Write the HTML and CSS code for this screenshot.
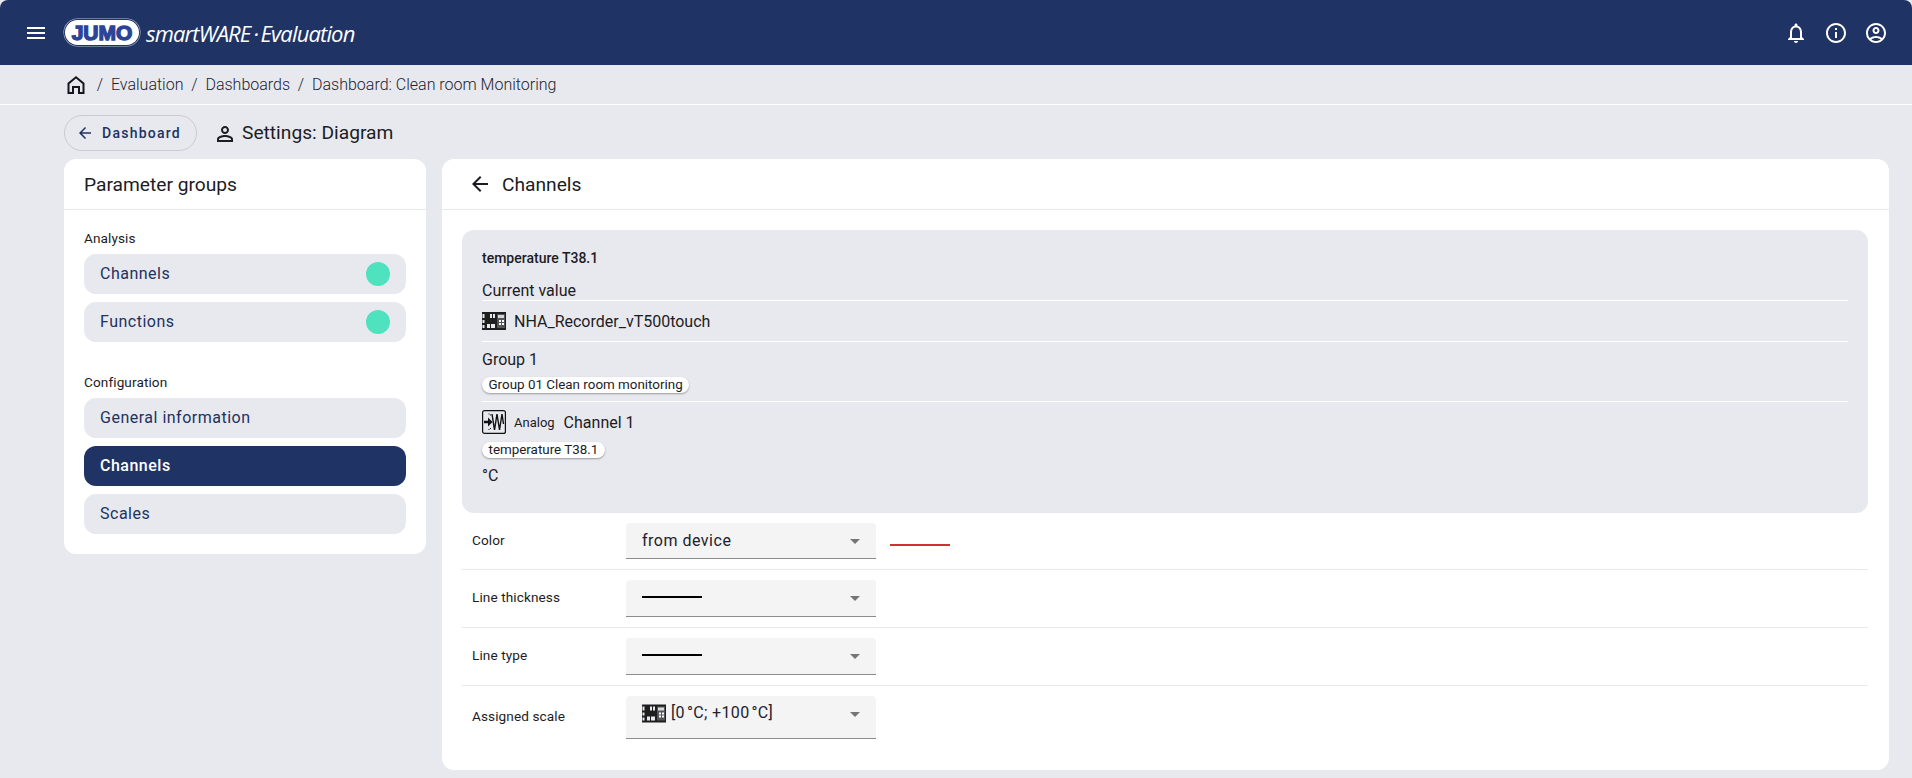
FILE: index.html
```html
<!DOCTYPE html>
<html lang="en">
<head>
<meta charset="utf-8">
<title>Settings: Diagram</title>
<link rel="stylesheet" href="styles.css">
</head>
<body>
<svg class="defs" width="0" height="0" aria-hidden="true">
  <symbol id="device" viewBox="0 0 24 18">
    <rect width="24" height="18" fill="#1e1e1e"/>
    <rect x="0.5" y="2" width="2" height="4" fill="#e8e9ef"/>
    <rect x="0.5" y="8" width="2" height="3" fill="#e8e9ef"/>
    <rect x="0.5" y="13" width="2" height="3" fill="#e8e9ef"/>
    <rect x="8" y="2" width="2" height="4" fill="#e8e9ef"/>
    <rect x="11" y="2" width="2" height="4" fill="#e8e9ef"/>
    <rect x="5" y="12" width="3" height="4" fill="#e8e9ef"/>
    <rect x="9" y="12" width="4" height="4" fill="#e8e9ef"/>
    <rect x="15" y="2" width="8" height="14" fill="#55565a"/>
    <rect x="16" y="3" width="6" height="3" fill="#d8d9dd"/>
    <rect x="17" y="8" width="2" height="2" fill="#fff"/>
    <rect x="20" y="8" width="2" height="2" fill="#fff"/>
    <rect x="17" y="11" width="2" height="2" fill="#fff"/>
    <rect x="20" y="11" width="2" height="2" fill="#fff"/>
  </symbol>
</svg>

<header class="topbar">
  <svg class="menu" viewBox="0 0 24 24" width="24" height="24"><path d="M3 18h18v-2H3v2zm0-5h18v-2H3v2zm0-7v2h18V6H3z" fill="#fff"/></svg>
  <div class="logo"><span class="logo-jumo">JUMO</span></div>
  <span class="brand">smartWARE&#8201;·&#8201;Evaluation</span>
  <div class="top-icons">
    <svg viewBox="0 0 24 24" width="24" height="24"><path d="M12 22c1.100 0 2-.9 2-2h-4c0 1.100.9 2 2 2zm6-6v-5c0-3.070-1.630-5.640-4.500-6.320V4c0-.83-.67-1.500-1.500-1.500s-1.500.67-1.500 1.500v.68C7.640 5.360 6 7.920 6 11v5l-2 2v1h16v-1l-2-2zm-2 1H8v-6c0-2.480 1.510-4.500 4-4.500s4 2.020 4 4.500v6z" fill="#fff"/></svg>
    <svg viewBox="0 0 24 24" width="24" height="24"><path d="M11 7h2v2h-2zm0 4h2v6h-2zm1-9C6.480 2 2 6.480 2 12s4.480 10 10 10 10-4.480 10-10S17.520 2 12 2zm0 18c-4.410 0-8-3.590-8-8s3.590-8 8-8 8 3.590 8 8-3.590 8-8 8z" fill="#fff"/></svg>
    <svg viewBox="0 0 24 24" width="24" height="24"><path d="M12 2C6.480 2 2 6.480 2 12s4.480 10 10 10 10-4.480 10-10S17.520 2 12 2zM7.350 18.500C8.660 17.560 10.260 17 12 17s3.340.56 4.650 1.500C15.340 19.440 13.740 20 12 20s-3.340-.56-4.650-1.500zm10.790-1.380C16.450 15.800 14.320 15 12 15s-4.450.8-6.140 2.120C4.700 15.730 4 13.950 4 12c0-4.420 3.580-8 8-8s8 3.580 8 8c0 1.950-.7 3.730-1.860 5.120zM12 6c-1.930 0-3.500 1.570-3.500 3.500S10.070 13 12 13s3.500-1.570 3.500-3.500S13.930 6 12 6zm0 5c-.83 0-1.500-.67-1.500-1.500S11.170 8 12 8s1.500.67 1.500 1.500S12.830 11 12 11z" fill="#fff"/></svg>
  </div>
</header>

<nav class="crumbs">
  <svg viewBox="0 0 24 24" width="24" height="24"><path d="M12 3 3.500 10v11h6.500v-6h4v6h6.500V10L12 3zm6.500 16h-2.500v-6h-8v6H5.500v-8.100L12 5.600l6.500 5.300V19z" fill="#15151f"/></svg>
  <span class="sep">/</span><span>Evaluation</span>
  <span class="sep">/</span><span>Dashboards</span>
  <span class="sep">/</span><span>Dashboard: Clean room Monitoring</span>
</nav>

<div class="titlebar">
  <button class="back-btn" type="button">
    <svg viewBox="0 0 24 24" width="18" height="18"><path d="M20 11H7.830l5.590-5.590L12 4l-8 8 8 8 1.410-1.410L7.830 13H20v-2z" fill="#20325f"/></svg>
    <span>Dashboard</span>
  </button>
  <svg class="person" viewBox="0 0 24 24" width="24" height="24"><path d="M12 6c1.100 0 2 .9 2 2s-.9 2-2 2-2-.9-2-2 .9-2 2-2m0 9c2.700 0 5.800 1.290 6 2v1H6v-.99c.2-.72 3.300-2.010 6-2.010M12 4C9.790 4 8 5.790 8 8s1.790 4 4 4 4-1.790 4-4-1.790-4-4-4zm0 9c-2.670 0-8 1.340-8 4v3h16v-3c0-2.660-5.330-4-8-4z" fill="#1c1c24"/></svg>
  <h1 class="page-title">Settings: Diagram</h1>
</div>

<main class="columns">
  <aside class="card side">
    <h2 class="card-head">Parameter groups</h2>
    <div class="side-body">
      <div class="group-label">Analysis</div>
      <ul class="items">
        <li class="item">Channels<i class="dot"></i></li>
        <li class="item">Functions<i class="dot"></i></li>
      </ul>
      <div class="group-label second">Configuration</div>
      <ul class="items">
        <li class="item">General information</li>
        <li class="item active">Channels</li>
        <li class="item">Scales</li>
      </ul>
    </div>
  </aside>

  <section class="card content">
    <h2 class="card-head with-back">
      <svg viewBox="0 0 24 24" width="24" height="24"><path d="M20 11H7.830l5.590-5.590L12 4l-8 8 8 8 1.410-1.410L7.830 13H20v-2z" fill="#1c1c24"/></svg>
      Channels
    </h2>
    <div class="content-body">
      <div class="panel">
        <div class="panel-title">temperature T38.1</div>
        <div class="panel-row r-current">Current value</div>
        <div class="panel-row r-device"><svg width="24" height="18"><use href="#device"/></svg><span>NHA_Recorder_vT500touch</span></div>
        <div class="panel-row r-group">
          <div>Group 1</div>
          <span class="chip">Group 01 Clean room monitoring</span>
        </div>
        <div class="r-channel">
          <div class="channel-line">
            <svg width="24" height="24" viewBox="0 0 24 24"><rect x="0.6" y="0.6" width="22.800" height="22.800" rx="2" fill="none" stroke="#111" stroke-width="1.200"/><path d="M2 12h5" stroke="#111" stroke-width="2.500"/><path d="m6 7.500 4.500 4.500L6 16.500z" fill="#111"/><path d="M6.500 4h1M8 5h1M6.500 19.500h1M8 18.500h1" stroke="#111" stroke-width="1"/><path d="M10 4l2.500 16L15 4l2.500 16L20 4l1.500 10" fill="none" stroke="#111" stroke-width="1.400"/></svg>
            <span class="analog">Analog</span><span>Channel 1</span>
          </div>
          <span class="chip">temperature T38.1</span>
          <div class="unit">°C</div>
        </div>
      </div>

      <div class="form-row first">
        <label>Color</label>
        <div class="select s36"><span class="val">from device</span><i class="caret"></i></div>
        <i class="swatch"></i>
      </div>
      <div class="form-row">
        <label>Line thickness</label>
        <div class="select s37"><i class="line"></i><i class="caret"></i></div>
      </div>
      <div class="form-row">
        <label>Line type</label>
        <div class="select s37"><i class="line"></i><i class="caret"></i></div>
      </div>
      <div class="form-row last">
        <label>Assigned scale</label>
        <div class="select s43"><span class="val scale"><svg width="24" height="19"><use href="#device"/></svg><span class="scale-text">[0&#8202;°C; +100&#8202;°C]</span></span><i class="caret"></i></div>
      </div>
    </div>
  </section>
</main>
</body>
</html>
```

FILE: styles.css
```css
* { box-sizing: border-box; }
html, body { margin: 0; padding: 0; }
body {
  width: 1912px;
  height: 778px;
  overflow: hidden;
  background: #e8e9ef;
  font-family: Roboto, "Liberation Sans", sans-serif;
  color: #1c1c24;
  font-size: 16px;
}
.defs { position: absolute; }
h1, h2 { margin: 0; font-weight: 400; }
ul { list-style: none; margin: 0; padding: 0; }

.topbar {
  height: 65px;
  background: #203365;
  border-radius: 8px 8px 0 0;
  display: flex;
  align-items: center;
  padding: 0 24px;
  color: #fff;
}
.menu { margin-right: 17px; flex: none; }
.logo {
  width: 74px;
  height: 25px;
  border-radius: 13px;
  background: #fff;
  box-shadow: 0 0 0 1px #203365, 0 0 0 1.500px #b9c2da;
  display: flex;
  align-items: center;
  justify-content: center;
  flex: none;
}
.logo-jumo {
  display: block;
  line-height: 20px;
  color: #2c4496;
  font-family: "Liberation Sans", sans-serif;
  font-weight: 700;
  font-size: 21px;
  -webkit-text-stroke: 1.400px #2c4496;
}
.brand {
  margin-left: 7px;
  font-family: "Open Sans", sans-serif;
  font-style: italic;
  font-weight: 400;
  font-size: 22px;
  letter-spacing: -0.860px;
  white-space: nowrap;
}
.top-icons { margin-left: auto; display: flex; gap: 16px; }

.crumbs {
  height: 40px;
  border-bottom: 1px solid #fff;
  padding: 0 64px;
  display: flex;
  align-items: center;
  font-size: 16px;
  font-weight: 300;
  color: #22222c;
}
.crumbs .sep { margin: 0 7.800px; }
.crumbs svg { margin-right: 1px; }

.titlebar {
  height: 54px;
  padding: 10px 64px 0;
  display: flex;
  align-items: flex-start;
}
.back-btn {
  width: 133px;
  height: 36px;
  border: 1px solid #c9cad2;
  border-radius: 18px;
  background: transparent;
  display: flex;
  align-items: center;
  padding: 0 0 0 11px;
  gap: 8px;
  color: #20325f;
  font: 500 14px Roboto, sans-serif;
  letter-spacing: 1.250px;
}
.person { margin: 7px 5px 0 16px; }
.page-title { font-size: 19.200px; line-height: 36px; }

.columns {
  display: flex;
  align-items: flex-start;
  gap: 16px;
  padding: 0 23px 0 64px;
}
.card { background: #fff; border-radius: 12px; }
.card-head {
  height: 51px;
  border-bottom: 1px solid #e8e9ef;
  display: flex;
  align-items: center;
  padding: 0 20px;
  font-size: 19.200px;
}
.side { width: 362px; height: 395px; }
.side-body { padding: 20px; }
.group-label { font-size: 13.600px; line-height: 16px; letter-spacing: .1px; margin-bottom: 8px; }
.group-label.second { margin-top: 32px; }
.items { display: flex; flex-direction: column; gap: 8px; }
.item {
  height: 40px;
  border-radius: 12px;
  background: #e8e9ef;
  display: flex;
  align-items: center;
  justify-content: space-between;
  padding: 0 16px 1px;
  font-size: 16px;
  letter-spacing: .5px;
  color: #20325f;
}
.item .dot { margin-top: 1px; }
.item.active { background: #203365; color: #fff; font-weight: 500; }
.dot { width: 24px; height: 24px; border-radius: 50%; background: #4fe2bf; }

.content { width: 1447px; height: 611px; }
.with-back { padding-left: 26px; gap: 10px; }
.content-body { padding: 20px 21px 0 20px; }

.panel {
  height: 283px;
  background: #e8e9ef;
  border-radius: 12px;
  padding: 20px 20px 0;
}
.panel-title { font-size: 14px; font-weight: 500; line-height: 16px; }
.panel-row { border-bottom: 1px solid #fff; line-height: 24px; }
.r-current { margin-top: 13px; height: 22px; }
.r-device { height: 41px; display: flex; align-items: center; gap: 8px; }
.r-device span { padding-top: 2px; }
.r-group { height: 60px; padding-top: 6px; }
.r-group .chip { margin-top: 5px; }
.chip {
  display: table;
  height: 16px;
  line-height: 16px;
  padding: 0 6.500px;
  background: #fff;
  border-radius: 8px;
  box-shadow: 0 1px 2px rgba(0,0,0,.35);
  font-size: 13.400px;
}
.r-channel { padding-top: 8px; }
.channel-line { display: flex; align-items: center; height: 24px; }
.channel-line svg { margin-right: 8px; }
.analog { font-size: 13px; margin-right: 9px; }
.r-channel .chip { margin-top: 8px; }
.unit { margin-top: 6px; line-height: 24px; }

.form-row {
  display: flex;
  align-items: flex-start;
  border-bottom: 1px solid #e8e9ef;
  padding-top: 10px;
  height: 58px;
}
.form-row.first { height: 57px; }
.form-row.last { border-bottom: 0; height: 60px; }
.form-row label {
  width: 164px;
  padding: 7px 0 0 10px;
  font-size: 13.600px;
  line-height: 20px;
  letter-spacing: .1px;
  flex: none;
}
.form-row.last label { padding-top: 10px; }
.select {
  width: 250px;
  background: #f4f4f5;
  border-bottom: 1px solid #8c8c8c;
  border-radius: 4px 4px 0 0;
  position: relative;
  padding: 0 16px;
  display: flex;
  align-items: flex-start;
  flex: none;
}
.s36 { height: 36px; }
.s37 { height: 37px; }
.s43 { height: 43px; }
.val { font-size: 16px; line-height: 20px; margin-top: 8px; letter-spacing: .5px; color: #22222c; }
.val.scale { margin-top: 8px; display: flex; align-items: flex-start; gap: 5px; line-height: 16px; letter-spacing: .35px; }
.scale-text { margin-top: 1px; }
.caret {
  position: absolute;
  right: 16px;
  top: 16px;
  width: 0; height: 0;
  border-left: 5px solid transparent;
  border-right: 5px solid transparent;
  border-top: 5px solid #757575;
}
.line { display: block; width: 60px; height: 2px; background: #000; margin-top: 16px; }
.swatch { display: block; width: 60px; height: 2px; background: #d32f2f; margin: 21px 0 0 14px; }
```
